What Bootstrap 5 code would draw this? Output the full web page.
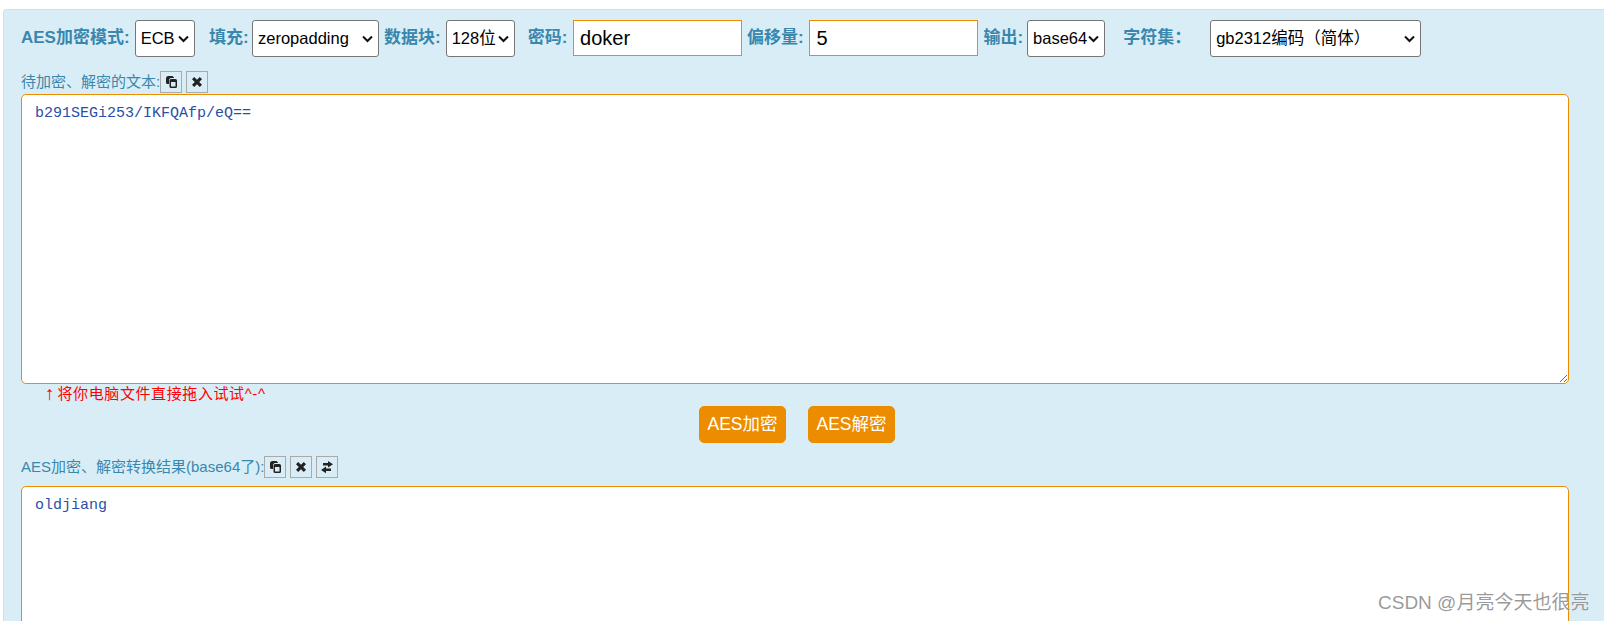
<!DOCTYPE html>
<html lang="zh-CN">
<head>
<meta charset="utf-8">
<title>AES</title>
<link href="https://cdn.jsdelivr.net/npm/bootstrap@5.3.0/dist/css/bootstrap.min.css" rel="stylesheet">
<style>
html,body{height:621px;overflow:hidden;background:#fff}
body{font-family:"Liberation Sans","Noto Sans CJK SC",sans-serif;font-size:15px;color:#3a87ad;line-height:1.2}
.aes-panel{margin:9px 0 0 3px;height:612px;overflow:hidden;background:#d9edf7;border:1px solid #bce8f1;border-right:0;border-bottom:0;border-radius:4px 0 0 0;padding:10px 35px 0 17px}
.opt-row{height:37px;gap:5px}
.opt-label{font-size:17px;font-weight:700;white-space:nowrap;margin:0}
.opt-select{height:37px;font-size:16.5px;font-family:inherit;color:#000;border:1px solid #767676;border-radius:3px;padding:0 16px 0 5px;appearance:none;-webkit-appearance:none;background:#fff url("data:image/svg+xml,%3Csvg xmlns='http://www.w3.org/2000/svg' width='11' height='8' viewBox='0 0 11 8'%3E%3Cpath d='M1 1.500 5.500 6 10 1.500' fill='none' stroke='%23111' stroke-width='2'/%3E%3C/svg%3E") no-repeat right 5px center}
.opt-input{height:36px;width:169px;font-size:20px;font-family:inherit;color:#000;background:#fff;border:1px solid #ec8d00;padding:0 6px;outline:0;margin:-1px 0 0 .7px}
.lab-tight{margin-right:-1.700px}
.lab-snug{margin-right:-1px}
.ml-a{margin-left:9.400px}.ml-b{margin-left:8px}.ml-c{margin-left:13.100px}.ml-d{margin-left:14px}
.w-ecb{width:60px}.w-zero{width:127px}.w-128{width:69px}.w-out{width:78px}.w-set{width:211px}
.sect-head{height:22px;white-space:nowrap}
.sect-top{margin-top:14px;margin-bottom:1px}
.sect-bot{margin-top:13px;margin-bottom:8px}
.tool-btn{width:22px;height:22px;background:#d9edf7;border:1px solid #aaa;padding:0;display:flex;align-items:center;justify-content:center;color:#222}
.tool-btn svg{width:14px;height:14px;fill:currentColor;display:block}
.txt-box{display:block;width:100%;height:290px;background:#fff;border:1px solid #ec8d00;border-radius:5px;padding:9px 13px;font-family:"Liberation Mono",monospace;font-size:15px;line-height:20px;color:#2a4fa8;outline:0}
.hint-line{height:22px;color:#f00;padding:0 0 2px 24px;gap:3px;font-size:15px;letter-spacing:.6px}
.hint-arrow{font-size:19px;font-weight:700;line-height:18px;letter-spacing:0}
.act-row{gap:22px;margin:0 0 0 4px;height:37px}
.act-btn{width:87px;height:37px;padding:0;font-size:17.500px;line-height:35px;background:#ec8d00;border:1px solid #ec8d00;color:#fff;border-radius:5px;white-space:nowrap}
.act-btn:hover{background:#ec8d00;border-color:#ec8d00;color:#fff}
.mark-csdn{position:absolute;left:1378px;top:592px;font-size:19px;line-height:22px;color:rgba(120,120,120,.75);text-shadow:0 0 1px rgba(255,255,255,.8);white-space:nowrap}
</style>
</head>
<body>
<div class="aes-panel">
  <form onsubmit="return false">
    <div class="d-flex align-items-center opt-row">
      <label class="opt-label">AES加密模式:</label>
      <select class="opt-select w-ecb"><option>ECB</option></select>
      <label class="opt-label ml-a lab-tight">填充:</label>
      <select class="opt-select w-zero"><option>zeropadding</option></select>
      <label class="opt-label">数据块:</label>
      <select class="opt-select w-128"><option>128位</option></select>
      <label class="opt-label ml-b">密码:</label>
      <input class="opt-input" type="text" value="doker">
      <label class="opt-label">偏移量:</label>
      <input class="opt-input" type="text" value="5">
      <label class="opt-label lab-snug">输出:</label>
      <select class="opt-select w-out"><option>base64</option></select>
      <label class="opt-label ml-c">字符集：</label>
      <select class="opt-select w-set ml-d"><option>gb2312编码（简体）</option></select>
    </div>

    <div class="d-flex align-items-center sect-head sect-top">
      <span>待加密、解密的文本:</span>
      <div class="d-flex gap-1">
        <button class="tool-btn" type="button" aria-label="复制"><svg viewBox="0 0 14 14"><path d="M4.500 1h4L10 2.500V3H6.500L5 4.500V9H3.500A1.500 1.500 0 0 1 2 7.500V3.500A2.500 2.500 0 0 1 4.500 1z"/><path d="M7 4h4.500A1.500 1.500 0 0 1 13 5.500V11.500A1.500 1.500 0 0 1 11.500 13H7A1.500 1.500 0 0 1 5.500 11.500V5.500A1.500 1.500 0 0 1 7 4zM7 7v4.500h4.500V7z" fill-rule="evenodd"/></svg></button>
        <button class="tool-btn" type="button" aria-label="清空"><svg viewBox="0 0 14 14"><path d="M2 4.200 4.200 2 7 4.800 9.800 2 12 4.200 9.200 7 12 9.800 9.800 12 7 9.200 4.200 12 2 9.800 4.800 7z"/></svg></button>
      </div>
    </div>
    <textarea class="txt-box">b291SEGi253/IKFQAfp/eQ==</textarea>
    <div class="d-flex align-items-center hint-line"><span class="hint-arrow">↑</span><span>将你电脑文件直接拖入试试^-^</span></div>

    <div class="d-flex justify-content-center act-row">
      <button class="btn act-btn" type="button">AES加密</button>
      <button class="btn act-btn" type="button">AES解密</button>
    </div>

    <div class="d-flex align-items-center sect-head sect-bot">
      <span>AES加密、解密转换结果(base64了):</span>
      <div class="d-flex gap-1">
        <button class="tool-btn" type="button" aria-label="复制"><svg viewBox="0 0 14 14"><path d="M4.500 1h4L10 2.500V3H6.500L5 4.500V9H3.500A1.500 1.500 0 0 1 2 7.500V3.500A2.500 2.500 0 0 1 4.500 1z"/><path d="M7 4h4.500A1.500 1.500 0 0 1 13 5.500V11.500A1.500 1.500 0 0 1 11.500 13H7A1.500 1.500 0 0 1 5.500 11.500V5.500A1.500 1.500 0 0 1 7 4zM7 7v4.500h4.500V7z" fill-rule="evenodd"/></svg></button>
        <button class="tool-btn" type="button" aria-label="清空"><svg viewBox="0 0 14 14"><path d="M2 4.200 4.200 2 7 4.800 9.800 2 12 4.200 9.200 7 12 9.800 9.800 12 7 9.200 4.200 12 2 9.800 4.800 7z"/></svg></button>
        <button class="tool-btn" type="button" aria-label="交换"><svg viewBox="0 0 14 14"><path d="M3 3h5V1l5 3.200-5 3.300V5.400H3zM11 8.400H6V6.600l-5 3.400 5 3.300V11h5z"/></svg></button>
      </div>
    </div>
    <textarea class="txt-box">oldjiang</textarea>
  </form>
</div>
<div class="mark-csdn">CSDN @月亮今天也很亮</div>
</body>
</html>
